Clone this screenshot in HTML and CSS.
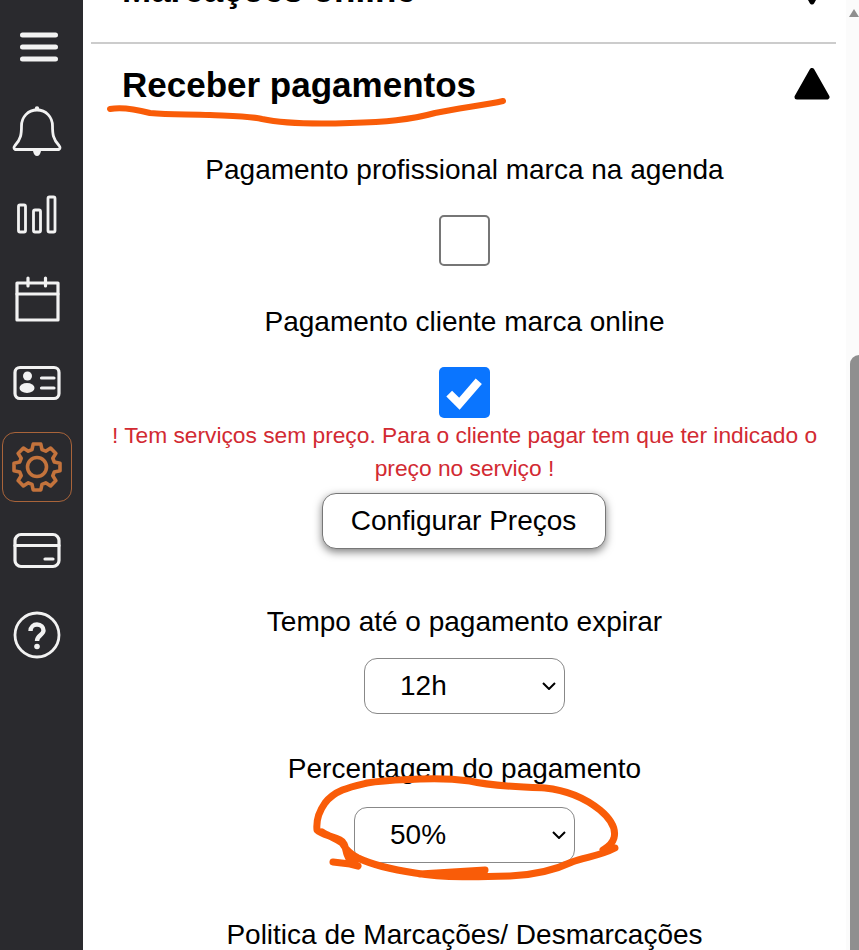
FILE: index.html
```html
<!DOCTYPE html>
<html lang="pt">
<head>
  <meta charset="UTF-8" />
  <title>Receber pagamentos</title>
  <link rel="stylesheet" href="styles.css">
</head>
<body>

  <aside class="sidebar">
    <a class="nav-item">
      <svg viewBox="0 0 70 70"><path class="line thick" d="M20.5 23H53.5M20.5 35H53.5M20.5 47H53.5"/></svg>
    </a>
    <a class="nav-item">
      <svg viewBox="0 0 70 70">
        <path class="line" d="M13 53.500H57Q59 52 57 49.500C51 43 50.500 38 50.500 30C50.500 21 44 14 35 14C26 14 19.500 21 19.500 30C19.500 38 19 43 13 49.500Q11 52 13 53.500Z"/>
        <circle class="solid" cx="35" cy="12.500" r="2.200"/>
        <path class="solid" d="M31 55H39Q38 60 35 60Q32 60 31 55Z"/>
      </svg>
    </a>
    <a class="nav-item">
      <svg viewBox="0 0 70 70">
        <rect class="line" x="16.500" y="25" width="7" height="27" rx="1.500"/>
        <rect class="line" x="31.500" y="30" width="7" height="22" rx="1.500"/>
        <rect class="line" x="46" y="17" width="7" height="35" rx="1.500"/>
      </svg>
    </a>
    <a class="nav-item">
      <svg viewBox="0 0 70 70">
        <rect class="line med" x="15" y="19" width="41" height="37"/>
        <path class="line med" d="M15 30H56M26 14V22M43.500 14V22"/>
      </svg>
    </a>
    <a class="nav-item">
      <svg viewBox="0 0 70 70">
        <rect class="line med" x="13" y="19.500" width="44" height="31" rx="5"/>
        <circle class="solid" cx="25.500" cy="28" r="4.500"/>
        <ellipse class="solid" cx="25" cy="40" rx="7.500" ry="5"/>
        <path class="line med" d="M39.500 30H52M39.500 40H52"/>
      </svg>
    </a>
    <a class="nav-item active">
      <svg viewBox="0 0 70 70">
        <polygon class="line gear" transform="translate(35 35)" points="-5,-17.300 -3.800,-23 3.800,-23 5,-17.300 8.700,-15.800 13.600,-18.900 18.900,-13.600 15.800,-8.700 17.300,-5 23,-3.800 23,3.800 17.300,5 15.800,8.700 18.900,13.600 13.600,18.900 8.700,15.800 5,17.300 3.800,23 -3.800,23 -5,17.300 -8.700,15.800 -13.600,18.900 -18.900,13.600 -15.800,8.700 -17.300,5 -23,3.800 -23,-3.800 -17.300,-5 -15.800,-8.700 -18.900,-13.600 -13.600,-18.900 -8.700,-15.800"/>
        <circle class="line gear" cx="35" cy="35" r="9.500"/>
      </svg>
    </a>
    <a class="nav-item">
      <svg viewBox="0 0 70 70">
        <rect class="line med" x="13" y="18.500" width="44" height="32" rx="6"/>
        <path class="line med" d="M13 29.500H57M43 43H51"/>
      </svg>
    </a>
    <a class="nav-item">
      <svg viewBox="0 0 70 70">
        <circle class="line" cx="35" cy="35" r="22"/>
        <path class="line q" d="M28.500 31C28.500 27 31.500 24.500 35 24.500C39 24.500 41.500 27.500 41.500 30.500C41.500 35 35 35 35 41"/>
        <circle class="solid" cx="35" cy="46.500" r="2.800"/>
      </svg>
    </a>
  </aside>

  <main class="content">
    <section class="acc acc-closed">
      <div class="acc-head">
        <h2>Marcações online</h2>
        <svg class="acc-arrow" viewBox="0 0 36 32"><polygon points="4,4 32,4 18,29"/></svg>
      </div>
    </section>

    <section class="acc">
      <div class="acc-head">
        <h2>Receber pagamentos</h2>
        <svg class="acc-arrow" viewBox="0 0 36 32"><polygon points="18,2.500 33,29 3,29"/></svg>
      </div>

      <div class="field first">
        <p class="label">Pagamento profissional marca na agenda</p>
        <span class="check"></span>
      </div>

      <div class="field second">
        <p class="label">Pagamento cliente marca online</p>
        <span class="check on">
          <svg viewBox="0 0 50 50"><path d="M10 26L20 36L39 14"/></svg>
        </span>
        <p class="warn">! Tem serviços sem preço. Para o cliente pagar tem que ter indicado o preço no serviço !</p>
        <button class="btn">Configurar Preços</button>
      </div>

      <div class="field expire">
        <p class="label">Tempo até o pagamento expirar</p>
        <select class="sel sel-time">
          <option>12h</option>
          <option>24h</option>
        </select>
      </div>

      <div class="field percent">
        <p class="label">Percentagem do pagamento</p>
        <select class="sel sel-pct">
          <option>50%</option>
          <option>100%</option>
        </select>
      </div>

      <div class="field policy">
        <p class="label">Politica de Marcações/ Desmarcações</p>
      </div>
    </section>
  </main>

  <!-- scrollbar -->
  <div class="scroll-track">
    <div class="scroll-up"></div>
    <div class="scroll-thumb"></div>
  </div>

  <!-- hand drawn marks on top of the screenshot -->
  <svg class="marks" viewBox="0 0 859 950">
    <path d="M110 109C120 107 135 109 150 113C170 115 190 114 210 115C235 116 250 116 262 119C285 124 320 124 350 123C385 122 410 120 435 113C460 108 485 105 503 101"/>
    <path class="ring" d="M333 862L350 864L358 866M358 866C340 856 350 845 340 840C330 835 322 835 317 830C316 820 320 810 325 803C335 790 350 787 367 783C385 780 400 780 420 779C440 778 455 779 470 781C490 786 520 787 545 788C565 790 585 798 600 810C612 820 616 830 614 838C612 845 606 848 603 850L615 848C600 856 585 857 572 862C555 870 535 875 510 876C480 877 445 878 415 873C395 870 375 866 358 858C350 854 345 848 342 843C335 838 328 836 322 832M420 874L485 870"/>
  </svg>

</body>
</html>
```

FILE: styles.css
```css
:root {
  --dark: #2a2a2e;
  --icon: #f2f2f2;
  --accent: #c4733c;
  --mark: #f95c08;
}
* {
  box-sizing: border-box;
}
body {
  margin: 0;
  height: 950px;
  overflow: hidden;
  display: flex;
  background-color: #fff;
  color: #000;
  font-family: "Liberation Sans", Arial, sans-serif;
}
p {
  margin: 0;
}

/* sidebar */
.sidebar {
  flex: 0 0 83px;
  background-color: var(--dark);
  display: flex;
  flex-direction: column;
  gap: 14px;
  padding: 12px 0 0 2px;
}
.nav-item {
  display: block;
  width: 70px;
  height: 70px;
  border: 1px solid transparent;
  border-radius: 13px;
  color: var(--icon);
}
.nav-item svg {
  display: block;
  width: 70px;
  height: 70px;
  margin: -1px;
}
.nav-item.active {
  border-color: #a9643a;
  color: var(--accent);
}
.line {
  fill: none;
  stroke: currentColor;
  stroke-width: 2.8;
  stroke-linecap: round;
  stroke-linejoin: round;
}
.line.med {
  stroke-width: 3.2;
}
.line.gear {
  stroke-width: 3.6;
}
.line.thick {
  stroke-width: 5;
}
.line.q {
  stroke-width: 4.4;
  stroke-linecap: butt;
}
.solid {
  fill: currentColor;
}

/* accordion */
.content {
  flex: 1;
  padding: 0 23px 0 8px;
}
.acc-head {
  display: flex;
  align-items: center;
  justify-content: space-between;
  padding: 0 6px 0 31px;
}
.acc-head h2 {
  margin: 0;
  font-size: 35px;
  font-weight: 700;
  line-height: 40px;
}
.acc-arrow {
  width: 36px;
  height: 32px;
  margin-top: -2px;
  fill: #000;
  stroke: #000;
  stroke-width: 5;
  stroke-linejoin: round;
}
.acc-closed {
  margin-top: -30px;
  height: 74px;
  border-bottom: 2px solid #ccc;
}
.acc-closed + .acc .acc-head {
  margin-top: 21px;
}

/* fields */
.field {
  display: flex;
  flex-direction: column;
  align-items: center;
  padding-left: 2px;
  text-align: center;
}
.label {
  font-size: 28px;
  line-height: 32px;
}
.first {
  margin-top: 49px;
}
.second {
  margin-top: 40px;
}
.expire {
  margin-top: 57px;
}
.percent {
  margin-top: 39px;
}
.policy {
  margin-top: 56px;
}
.check {
  display: block;
  width: 51px;
  height: 51px;
  margin-top: 29px;
  border: 2px solid #767676;
  border-radius: 5px;
  background-color: #fff;
}
.check.on {
  border: 0;
  background-color: #0a75ff;
}
.check svg {
  display: block;
  width: 51px;
  height: 51px;
  fill: none;
  stroke: #fff;
  stroke-width: 8;
}
.warn {
  margin-top: 1px;
  font-size: 22.75px;
  line-height: 33px;
  color: #d22a32;
}
.btn {
  width: 284px;
  height: 56px;
  margin: 8px 2px 0 0;
  border: 1px solid #777;
  border-radius: 14px;
  background-color: #fff;
  box-shadow: 0 3px 8px rgba(0, 0, 0, 0.5);
  font-family: inherit;
  font-size: 28px;
  color: #000;
}
.sel {
  height: 56px;
  margin-top: 20px;
  padding: 0 0 2px 35px;
  appearance: none;
  border: 1px solid #888;
  border-radius: 13px;
  background-color: #fff;
  background-image: url("data:image/svg+xml,%3Csvg xmlns='http://www.w3.org/2000/svg' viewBox='0 0 14 8'%3E%3Cpath d='M1 1L7 7L13 1' fill='none' stroke='%23000' stroke-width='2'/%3E%3C/svg%3E");
  background-repeat: no-repeat;
  background-position: right 8px center;
  background-size: 14px 8px;
  font-family: inherit;
  font-size: 28px;
  color: #000;
}
.sel-time {
  width: 201px;
}
.sel-pct {
  width: 221px;
  margin-top: 22px;
}

/* scrollbar */
.scroll-track {
  position: absolute;
  top: 0;
  right: 0;
  bottom: 0;
  width: 13px;
  background-color: #fbfbfb;
}
.scroll-up {
  position: absolute;
  top: 9px;
  right: 0;
  border-style: solid;
  border-width: 0 5px 8px;
  border-color: transparent transparent #8f8f8f;
}
.scroll-thumb {
  position: absolute;
  top: 355px;
  right: 0;
  bottom: 0;
  width: 9px;
  border-radius: 9px 0 0 0;
  background-color: #8f8f8f;
}

/* orange pen marks */
.marks {
  position: absolute;
  top: 0;
  left: 0;
  width: 859px;
  height: 950px;
  fill: none;
  stroke: var(--mark);
  stroke-width: 6;
  stroke-linecap: round;
  stroke-linejoin: round;
  pointer-events: none;
}
.marks .ring {
  stroke-width: 7;
}
```
